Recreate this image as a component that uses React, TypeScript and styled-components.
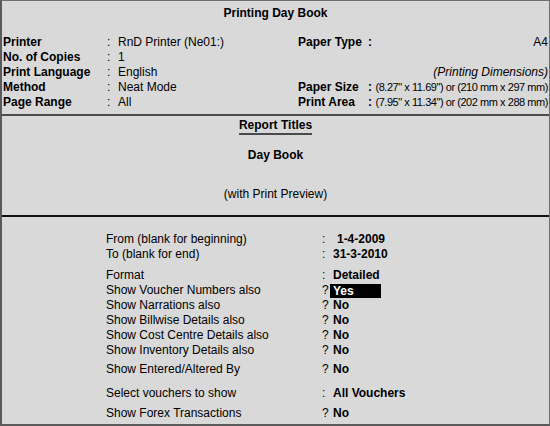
import styled, { createGlobalStyle } from "styled-components";

const GlobalStyle = createGlobalStyle`
  html, body {
    margin: 0;
    padding: 0;
    background: #d9d9d9;
  }
  body {
    font-family: "Liberation Sans", Arial, sans-serif;
    font-size: 12px;
    color: #000;
  }
`;

const Window = styled.div`
  width: 550px;
  height: 426px;
  box-sizing: border-box;
  background: #d9d9d9;
  border-top: 1px solid #6e6e6e;
  border-right: 1px solid #6e6e6e;
  border-left: 2px solid #5a5a5a;
  border-bottom: 2px solid #5a5a5a;
  display: flex;
  flex-direction: column;
`;

const Header = styled.section`
  padding: 4px 1px 4px 1px;
  border-bottom: 2px solid #4c4c4c;
`;

const Title = styled.h1`
  margin: 0 0 14px;
  font-size: 12px;
  line-height: 16px;
  font-weight: bold;
  text-align: center;
`;

const InfoGrid = styled.div`
  display: grid;
  grid-template-columns: 104px 11px 1fr 70px 8px 172px;
  grid-auto-rows: 15px;
  line-height: 15px;
  white-space: nowrap;
`;

const Label = styled.span`
  font-weight: bold;
`;

const Value = styled.span<{ $right?: boolean; $tight?: boolean; $italic?: boolean }>`
  justify-self: ${(p) => (p.$right ? "end" : "start")};
  font-size: ${(p) => (p.$tight ? "11px" : "12px")};
  letter-spacing: ${(p) => (p.$tight ? "-0.45px" : "normal")};
  font-style: ${(p) => (p.$italic ? "italic" : "normal")};
`;

const Empty = styled.span``;

const Titles = styled.section`
  padding-top: 2px;
  display: flex;
  flex-direction: column;
  align-items: center;
  border-bottom: 2px solid #111;
  height: 101px;
  box-sizing: border-box;
`;

const TitleLine = styled.div<{ $top?: number; $bold?: boolean; $underline?: boolean }>`
  margin-top: ${(p) => p.$top ?? 0}px;
  line-height: 15px;
  font-weight: ${(p) => (p.$bold ? "bold" : "normal")};
  border-bottom: ${(p) => (p.$underline ? "2px solid #4a4a4a" : "none")};
`;

const Options = styled.section`
  flex: 1;
  padding: 15px 0 0 104px;
`;

const OptionRow = styled.div<{ $gap?: number }>`
  display: grid;
  grid-template-columns: 216px 8px auto;
  line-height: 15px;
  height: 15px;
  margin-top: ${(p) => p.$gap ?? 0}px;
  white-space: nowrap;
`;

const Sep = styled.span`
  text-align: left;
`;

const OptValue = styled.span<{ $width?: number; $right?: boolean; $selected?: boolean }>`
  font-weight: bold;
  box-sizing: border-box;
  padding-left: 3px;
  width: ${(p) => (p.$width ? `${p.$width}px` : "auto")};
  text-align: ${(p) => (p.$right ? "right" : "left")};
  background: ${(p) => (p.$selected ? "#000" : "transparent")};
  color: ${(p) => (p.$selected ? "#fff" : "#000")};
  line-height: 14px;
  margin-top: ${(p) => (p.$selected ? "1px" : "0")};
  height: ${(p) => (p.$selected ? "14px" : "auto")};
  align-self: start;
`;

type Opt = {
  label: string;
  sep: string;
  value: string;
  gap?: number;
  width?: number;
  right?: boolean;
  selected?: boolean;
};

const options: Opt[] = [
  { label: "From (blank for beginning)", sep: ":", value: "1-4-2009", width: 55, right: true },
  { label: "To (blank for end)", sep: ":", value: "31-3-2010", width: 55, right: true },
  { label: "Format", sep: ":", value: "Detailed", gap: 6 },
  { label: "Show Voucher Numbers also", sep: "?", value: "Yes", width: 51, selected: true },
  { label: "Show Narrations also", sep: "?", value: "No" },
  { label: "Show Billwise Details also", sep: "?", value: "No" },
  { label: "Show Cost Centre Details also", sep: "?", value: "No" },
  { label: "Show Inventory Details also", sep: "?", value: "No" },
  { label: "Show Entered/Altered By", sep: "?", value: "No", gap: 4 },
  { label: "Select vouchers to show", sep: ":", value: "All Vouchers", gap: 9 },
  { label: "Show Forex Transactions", sep: "?", value: "No", gap: 5 },
];

export default function App() {
  return (
    <>
      <GlobalStyle />
      <Window>
        <Header>
          <Title>Printing Day Book</Title>
          <InfoGrid>
            <Label>Printer</Label>
            <Empty>:</Empty>
            <Value>RnD Printer (Ne01:)</Value>
            <Label>Paper Type</Label>
            <Label>:</Label>
            <Value $right>A4</Value>

            <Label>No. of Copies</Label>
            <Empty>:</Empty>
            <Value>1</Value>
            <Empty />
            <Empty />
            <Empty />

            <Label>Print Language</Label>
            <Empty>:</Empty>
            <Value>English</Value>
            <Empty />
            <Empty />
            <Value $right $italic>(Printing Dimensions)</Value>

            <Label>Method</Label>
            <Empty>:</Empty>
            <Value>Neat Mode</Value>
            <Label>Paper Size</Label>
            <Label>:</Label>
            <Value $right $tight>(8.27" x 11.69") or (210 mm x 297 mm)</Value>

            <Label>Page Range</Label>
            <Empty>:</Empty>
            <Value>All</Value>
            <Label>Print Area</Label>
            <Label>:</Label>
            <Value $right $tight>(7.95" x 11.34") or (202 mm x 288 mm)</Value>
          </InfoGrid>
        </Header>

        <Titles>
          <TitleLine $bold $underline>Report Titles</TitleLine>
          <TitleLine $bold $top={13}>Day Book</TitleLine>
          <TitleLine $top={24}>(with Print Preview)</TitleLine>
        </Titles>

        <Options>
          {options.map((o) => (
            <OptionRow key={o.label} $gap={o.gap}>
              <span>{o.label}</span>
              <Sep>{o.sep}</Sep>
              <OptValue $width={o.width} $right={o.right} $selected={o.selected}>
                {o.value}
              </OptValue>
            </OptionRow>
          ))}
        </Options>
      </Window>
    </>
  );
}
